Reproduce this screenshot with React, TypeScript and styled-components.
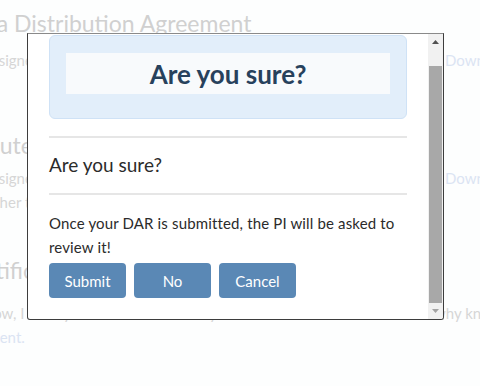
import React from "react";
import styled, { createGlobalStyle } from "styled-components";

const GlobalStyle = createGlobalStyle`
  html, body {
    margin: 0;
    padding: 0;
    background: #ffffff;
    overflow: hidden;
    font-family: "Lato", "Open Sans", sans-serif;
  }
`;

const Screen = styled.div`
  position: relative;
  width: 480px;
  height: 386px;
  overflow: hidden;
  background: #fdfefe;
`;

const Page = styled.div`
  margin-left: -40px;
  width: 560px;
  padding-top: 8px;
`;

const Heading = styled.h2<{ $top?: number }>`
  margin: ${(p) => p.$top ?? 0}px 0 0;
  font-size: 23px;
  font-weight: 400;
  color: #d0d0d0;
  line-height: 30px;
  white-space: nowrap;
`;

const Row = styled.div<{ $top?: number }>`
  display: grid;
  grid-template-columns: 476px auto;
  margin-top: ${(p) => p.$top ?? 0}px;
  padding-left: 22px;
  font-size: 15px;
  line-height: 24px;
  color: #d6d6d6;
  white-space: nowrap;
`;

const Side = styled.span`
  grid-column: 2;
  margin-left: -24px;
`;

const Link = styled.span<{ $side?: boolean }>`
  color: #dbe4f3;
  ${(p) => (p.$side ? "grid-column: 2; margin-left: -13px;" : "")}
`;

const Modal = styled.div`
  position: absolute;
  left: 27px;
  top: 33px;
  width: 415px;
  height: 285px;
  border: 1px solid #3d3d3d;
  border-top-color: #8a8a8a;
  border-radius: 0 0 3px 3px;
  background: #ffffff;
  display: flex;
  overflow: hidden;
`;

const Content = styled.div`
  flex: 1;
  padding: 1px 21px 0;
  color: #2b2b2b;
`;

const Banner = styled.div`
  border: 1px solid #cfe2f6;
  border-radius: 6px;
  background: #e2eefa;
  padding: 17px 16px 0;
  box-sizing: border-box;
  height: 84px;
`;

const BannerTitle = styled.div`
  height: 41px;
  background: #f8fafc;
  display: flex;
  align-items: center;
  justify-content: center;
  font-size: 26px;
  font-weight: 700;
  color: #27415c;
`;

const Rule = styled.hr<{ $top?: number }>`
  border: none;
  border-top: 2px solid #e6e6e6;
  margin: ${(p) => p.$top ?? 0}px 0 0;
`;

const Title = styled.div`
  font-size: 19px;
  padding: 15px 0 16px;
  line-height: 24px;
`;

const Body = styled.p`
  margin: 16px 0 4px;
  font-size: 15px;
  letter-spacing: 0.15px;
  line-height: 24px;
`;

const Actions = styled.div`
  display: flex;
  gap: 8px;
`;

const Button = styled.button`
  width: 77px;
  height: 35px;
  border: none;
  border-radius: 4px;
  background: #5a88b5;
  color: #ffffff;
  font-family: inherit;
  font-size: 15px;
  cursor: pointer;
`;

const ScrollTrack = styled.div`
  width: 15px;
  display: flex;
  flex-direction: column;
  background: #f1f1f1;
`;

const ScrollArrow = styled.div<{ $dim?: boolean }>`
  height: 16px;
  display: flex;
  align-items: center;
  justify-content: center;
  color: ${(p) => (p.$dim ? "#a3a3a3" : "#505050")};
`;

const ScrollThumb = styled.div`
  flex: 1;
  margin: 16px 1px 0;
  background: #a8a8a8;
`;

const Arrow = ({ down }: { down?: boolean }) => (
  <svg width="7" height="4" viewBox="0 0 7 4">
    <path d={down ? "M0 0H7L3.5 4Z" : "M0 4H7L3.5 0Z"} fill="currentColor" />
  </svg>
);

const App = () => {
  return (
    <Screen>
      <GlobalStyle />
      <Page>
        <Heading>Data Distribution Agreement</Heading>
        <Row $top={10}>
          <span>Assigned to the PI and the institution</span>
          <Link $side>Download</Link>
        </Row>
        <Heading $top={58}>Statute of Use</Heading>
        <Row $top={6}>
          <span>Assigned statute and data use limits</span>
          <Link $side>Download</Link>
        </Row>
        <Row>
          <span>Either the PI or the signing official</span>
        </Row>
        <Heading $top={41}>Certification</Heading>
        <Row $top={16}>
          <span>Now, I certify that to the best of my</span>
          <Side>why known</Side>
        </Row>
        <Row>
          <Link>Intent.</Link>
        </Row>
      </Page>

      <Modal>
        <Content>
          <Banner>
            <BannerTitle>Are you sure?</BannerTitle>
          </Banner>
          <Rule $top={17} />
          <Title>Are you sure?</Title>
          <Rule />
          <Body>
            Once your DAR is submitted, the PI will be asked to review it!
          </Body>
          <Actions>
            <Button>Submit</Button>
            <Button>No</Button>
            <Button>Cancel</Button>
          </Actions>
        </Content>
        <ScrollTrack>
          <ScrollArrow>
            <Arrow />
          </ScrollArrow>
          <ScrollThumb />
          <ScrollArrow $dim>
            <Arrow down />
          </ScrollArrow>
        </ScrollTrack>
      </Modal>
    </Screen>
  );
};

export default App;
